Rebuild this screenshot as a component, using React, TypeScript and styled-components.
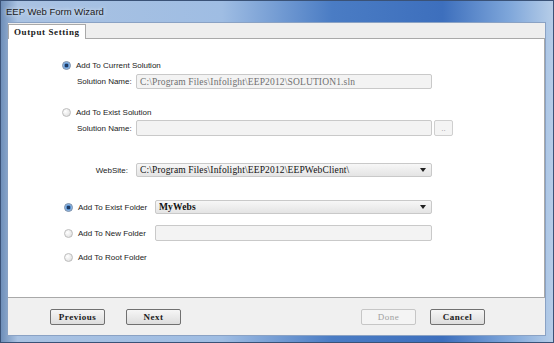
import React from 'react';
import styled, { createGlobalStyle } from 'styled-components';

const GlobalStyle = createGlobalStyle`
    html, body {
        margin: 0;
        padding: 0;
        background: #ffffff;
    }
`;

const Window = styled.div`
    width: 554px;
    height: 343px;
    display: flex;
    flex-direction: column;
    box-sizing: border-box;
    background: linear-gradient(90deg, #6f8fb9 0%, #a9c2e2 3%, #9fbde3 40%, #4a7cc4 60%, #3d6fbd 80%, #7ea6da 92%, #b6cde8 100%);
    border: 1px solid #3a5277;
    overflow: hidden;
`;

const TitleBar = styled.div`
    height: 21px;
    display: flex;
    align-items: center;
    padding-left: 5px;
    font-family: "Liberation Sans", Arial, sans-serif;
    font-size: 9.5px;
    color: #1a1a1a;
    text-shadow: 0 0 4px rgba(255, 255, 255, 0.9);
`;

const Body = styled.div`
    flex: 1;
    display: flex;
    flex-direction: column;
    margin: 0 7px 6px 6px;
    background: #f0f0f0;
    border: 1px solid #8aa2c4;
`;

const TabStrip = styled.div`
    height: 15px;
    display: flex;
    align-items: flex-end;
    background: #eeeeee;
    border-bottom: 1px solid #a9a9a9;
`;

const Tab = styled.div`
    height: 15px;
    margin-bottom: -1px;
    padding: 0 5px;
    display: flex;
    align-items: center;
    background: #ffffff;
    border: 1px solid #a9a9a9;
    border-bottom: none;
    box-sizing: border-box;
    font-family: "Liberation Serif", "Noto Sans CJK SC", serif;
    font-size: 9px;
    font-weight: bold;
    letter-spacing: 0.6px;
    color: #202020;
`;

const Panel = styled.div`
    height: 259px;
    background: #ffffff;
    border-right: 1px solid #a9a9a9;
    border-bottom: 1px solid #a9a9a9;
    box-sizing: border-box;
    display: flex;
    flex-direction: column;
`;

const Row = styled.div<{ $top: number; $left: number; $h?: number }>`
    display: flex;
    align-items: center;
    margin-top: ${({ $top }) => $top}px;
    margin-left: ${({ $left }) => $left}px;
    height: ${({ $h }) => $h ?? 14}px;
`;

const Radio = styled.span<{ $on?: boolean }>`
    width: 9px;
    height: 9px;
    border-radius: 50%;
    box-sizing: border-box;
    border: 1px solid ${({ $on }) => ($on ? '#6f87a6' : '#bdbdbd')};
    background: ${({ $on }) =>
        $on
            ? 'radial-gradient(circle, #1f3a62 0 1.5px, #4e88c9 2px, #a9cbee 3.5px, #e8eef5 4px)'
            : 'radial-gradient(circle at 35% 35%, #ffffff 0, #e9e9e9 60%, #d2d2d2 100%)'};
    margin-right: 5px;
    flex-shrink: 0;
`;

const Label = styled.span<{ $w?: number; $right?: boolean }>`
    font-family: "Liberation Sans", Arial, sans-serif;
    font-size: 8px;
    color: #222222;
    white-space: nowrap;
    width: ${({ $w }) => ($w ? `${$w}px` : 'auto')};
    text-align: ${({ $right }) => ($right ? 'right' : 'left')};
    flex-shrink: 0;
`;

const TextBox = styled.div<{ $w: number; $h?: number; $dim?: boolean; $bold?: boolean }>`
    width: ${({ $w }) => $w}px;
    height: ${({ $h }) => $h ?? 15}px;
    box-sizing: border-box;
    border: 1px solid #c9c9c9;
    border-radius: 2px;
    background: ${({ $dim }) => ($dim ? '#f3f3f3' : 'linear-gradient(#f7f7f7, #e4e4e4)')};
    display: flex;
    align-items: center;
    padding: 0 3px;
    font-family: "Liberation Serif", "Noto Sans CJK SC", serif;
    font-size: 9.5px;
    letter-spacing: 0.15px;
    font-weight: ${({ $bold }) => ($bold ? 'bold' : 'normal')};
    color: ${({ $dim }) => ($dim ? '#707070' : '#111111')};
    white-space: nowrap;
    overflow: hidden;
`;

const ComboText = styled.span`
    flex: 1;
    overflow: hidden;
`;

const Arrow = styled.span`
    width: 0;
    height: 0;
    border-left: 3px solid transparent;
    border-right: 3px solid transparent;
    border-top: 4px solid #202020;
    margin-right: 2px;
`;

const SmallButton = styled.div`
    width: 19px;
    height: 16px;
    margin-left: 2px;
    box-sizing: border-box;
    border: 1px solid #cfcfcf;
    border-radius: 2px;
    background: #f4f4f4;
    color: #9a9a9a;
    font-family: "Liberation Sans", Arial, sans-serif;
    font-size: 8px;
    display: flex;
    align-items: center;
    justify-content: center;
`;

const Footer = styled.div`
    flex: 1;
    display: flex;
    align-items: center;
    justify-content: space-between;
    padding: 0 60px 0 42px;
    background: #f0f0f0;
`;

const ButtonGroup = styled.div<{ $gap: number }>`
    display: flex;
    gap: ${({ $gap }) => $gap}px;
`;

const Button = styled.div<{ $disabled?: boolean }>`
    width: 55px;
    height: 16px;
    box-sizing: border-box;
    border: 1px solid ${({ $disabled }) => ($disabled ? '#c6c6c6' : '#707070')};
    border-radius: 2px;
    background: ${({ $disabled }) => ($disabled ? '#f4f4f4' : 'linear-gradient(#f6f6f6, #dddddd)')};
    display: flex;
    align-items: center;
    justify-content: center;
    font-family: "Liberation Serif", "Noto Sans CJK SC", serif;
    font-size: 9px;
    font-weight: ${({ $disabled }) => ($disabled ? 'normal' : 'bold')};
    letter-spacing: 0.5px;
    color: ${({ $disabled }) => ($disabled ? '#a0a0a0' : '#1a1a1a')};
`;

export default function App() {
    return (
        <>
            <GlobalStyle />
            <Window>
                <TitleBar>EEP Web Form Wizard</TitleBar>
                <Body>
                    <TabStrip>
                        <Tab>Output Setting</Tab>
                    </TabStrip>
                    <Panel>
                        <Row $top={19} $left={54}>
                            <Radio $on />
                            <Label>Add To Current Solution</Label>
                        </Row>
                        <Row $top={2} $left={69} $h={15}>
                            <Label $w={59}>Solution Name:</Label>
                            <TextBox $w={296} $dim>
                                C:\Program Files\Infolight\EEP2012\SOLUTION1.sln
                            </TextBox>
                        </Row>
                        <Row $top={16} $left={54}>
                            <Radio />
                            <Label>Add To Exist Solution</Label>
                        </Row>
                        <Row $top={1} $left={69} $h={16}>
                            <Label $w={59}>Solution Name:</Label>
                            <TextBox $w={296} $h={16} $dim />
                            <SmallButton>..</SmallButton>
                        </Row>
                        <Row $top={27} $left={69} $h={14}>
                            <Label $w={51} $right>WebSite:</Label>
                            <Label $w={8} />
                            <TextBox $w={296} $h={14}>
                                <ComboText>C:\Program Files\Infolight\EEP2012\EEPWebClient\</ComboText>
                                <Arrow />
                            </TextBox>
                        </Row>
                        <Row $top={23} $left={56} $h={14}>
                            <Radio $on />
                            <Label $w={77}>Add To Exist Folder</Label>
                            <TextBox $w={277} $h={14} $bold>
                                <ComboText>MyWebs</ComboText>
                                <Arrow />
                            </TextBox>
                        </Row>
                        <Row $top={11} $left={56} $h={16}>
                            <Radio />
                            <Label $w={77}>Add To New Folder</Label>
                            <TextBox $w={277} $h={16} $dim />
                        </Row>
                        <Row $top={9} $left={56}>
                            <Radio />
                            <Label>Add To Root Folder</Label>
                        </Row>
                    </Panel>
                    <Footer>
                        <ButtonGroup $gap={21}>
                            <Button>Previous</Button>
                            <Button>Next</Button>
                        </ButtonGroup>
                        <ButtonGroup $gap={14}>
                            <Button $disabled>Done</Button>
                            <Button>Cancel</Button>
                        </ButtonGroup>
                    </Footer>
                </Body>
            </Window>
        </>
    );
}
